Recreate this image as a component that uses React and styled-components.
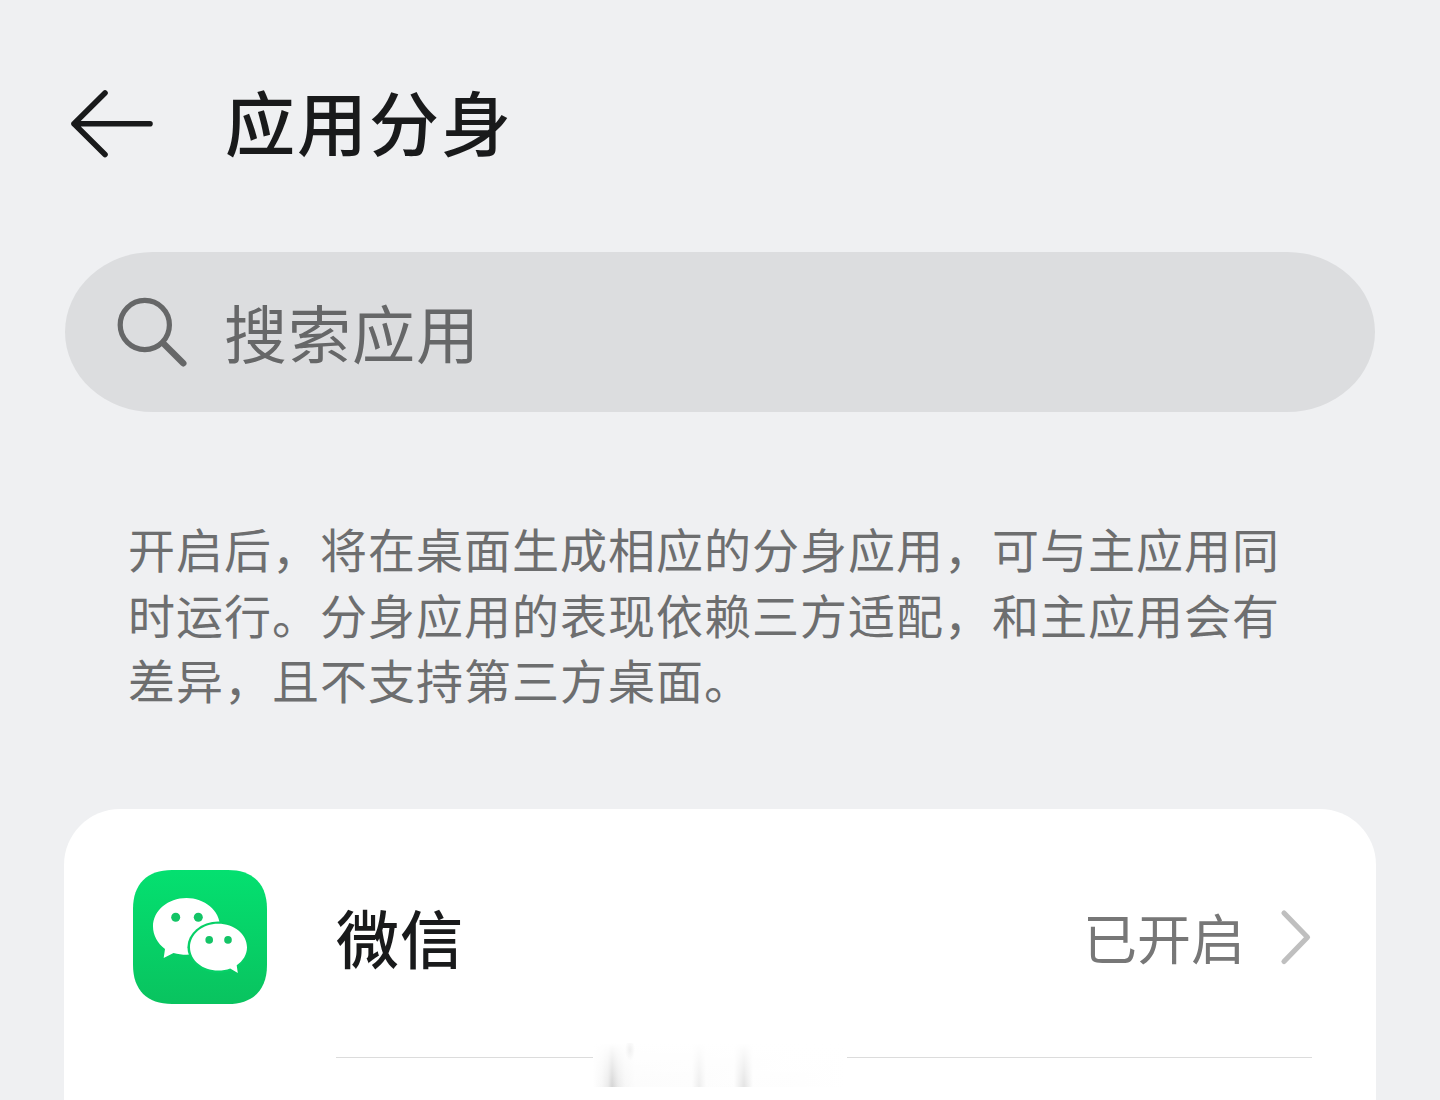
import React from 'react';
import styled, { createGlobalStyle } from 'styled-components';

const apps = [{ id: 'wechat', name: '微信', status: '已开启' }];

const WeChatLogo = () => (
  <svg width='136' height='136' viewBox='0 0 136 136'>
    <defs>
      <linearGradient id='wechatGreen' x1='0' y1='0' x2='0' y2='1'>
        <stop offset='0' stopColor='#04e070' />
        <stop offset='1' stopColor='#09c35f' />
      </linearGradient>
    </defs>
    <path
      d='M1 40C1 15 15 1 40 1H96C121 1 135 15 135 40V96C135 121 121 135 96 135H40C15 135 1 121 1 96Z'
      fill='url(#wechatGreen)'
    />
    <path
      d='M54.500 29C36 29 21 41.500 21 57.500C21 66.500 25.700 74.500 33 80L31.700 89L41.500 84C46 85.400 50 85.700 54.500 85.700C72.500 85.700 88 73 88 57.500C88 41.500 72.500 29 54.500 29Z'
      fill='#fff'
    />
    <ellipse cx='86.200' cy='78.300' rx='30.800' ry='25.700' fill='#07d067' />
    <path
      d='M86.200 54.800C70.600 54.800 58 65.100 58 78.300C58 91.500 70.600 101.600 86.200 101.600C90.500 101.600 94.500 100.800 98.200 99.400L105.800 104L104.700 96.300C111 92 115 85.700 115 78.300C115 65.100 102.100 54.800 86.200 54.800Z'
      fill='#fff'
    />
    <g fill='#13c466'>
      <circle cx='43.700' cy='48.300' r='4.500' />
      <circle cx='66.300' cy='48.300' r='4.500' />
      <circle cx='77.200' cy='70.900' r='3.800' />
      <circle cx='96' cy='70.900' r='3.800' />
    </g>
  </svg>
);

const BackIcon = () => (
  <svg width='88' height='76' viewBox='0 0 88 76' fill='none'>
    <path
      d='M38 8L7 38.700L38 69.500M7 38.700H83'
      stroke='#191a1b'
      strokeWidth='5.600'
      strokeLinecap='round'
      strokeLinejoin='round'
    />
  </svg>
);

const SearchIcon = () => (
  <svg width='72' height='72' viewBox='0 0 72 72' fill='none'>
    <g stroke='#666768' strokeLinecap='round'>
      <circle cx='28.800' cy='29' r='24.600' strokeWidth='5.200' />
      <path d='M47 47L67.300 67.300' strokeWidth='6.400' />
    </g>
  </svg>
);

const ChevronIcon = () => (
  <svg width='32' height='58' viewBox='0 0 32 58' fill='none'>
    <path
      d='M4 5L27.500 29.300L4 53.500'
      stroke='#bfbfbf'
      strokeWidth='5.200'
      strokeLinecap='round'
      strokeLinejoin='round'
    />
  </svg>
);

const App = () => {
  return (
    <Page>
      <GlobalStyle />
      <Header>
        <BackButton aria-label='返回'>
          <BackIcon />
        </BackButton>
        <Title>应用分身</Title>
      </Header>
      <SearchBar>
        <SearchIcon />
        <Placeholder>搜索应用</Placeholder>
      </SearchBar>
      <Description>
        开启后，将在桌面生成相应的分身应用，可与主应用同时运行。分身应用的表现依赖三方适配，和主应用会有差异，且不支持第三方桌面。
      </Description>
      <Card>
        {apps.map((app) => (
          <AppRow key={app.id}>
            <WeChatLogo />
            <RowBody>
              <AppName>{app.name}</AppName>
              <Status>{app.status}</Status>
              <ChevronIcon />
              <Smudge />
            </RowBody>
          </AppRow>
        ))}
      </Card>
    </Page>
  );
};

export default App;

const GlobalStyle = createGlobalStyle`
  * {
    box-sizing: border-box;
  }
  body {
    margin: 0;
    background: #eff0f2;
  }
  svg {
    display: block;
    flex-shrink: 0;
  }
`;

const Page = styled.div`
  width: 1440px;
  height: 1100px;
  overflow: hidden;
  display: flex;
  flex-direction: column;
  padding: 73px 64px 0;
  background: #eff0f2;
  font-family: 'Noto Sans CJK SC', sans-serif;
`;

const Header = styled.header`
  display: flex;
  align-items: center;
  height: 100px;
  padding-left: 3px;
`;

const BackButton = styled.button`
  padding: 0;
  border: 0;
  background: none;
`;

const Title = styled.h1`
  margin: 0 0 4px 70px;
  font-size: 70px;
  line-height: 100px;
  font-weight: 500;
  letter-spacing: 2px;
  color: #191a1b;
`;

const SearchBar = styled.div`
  display: flex;
  align-items: center;
  gap: 36px;
  height: 160px;
  margin: 79px 1px 0;
  padding-left: 51px;
  border-radius: 88px / 80px;
  background: #dcdddf;
`;

const Placeholder = styled.span`
  padding-bottom: 3px;
  font-size: 63px;
  line-height: 96px;
  font-weight: 400;
  letter-spacing: 1px;
  color: #666768;
`;

const Description = styled.p`
  width: 1154px;
  margin: 103px 0 0 64px;
  font-size: 47px;
  line-height: 65.6px;
  font-weight: 400;
  letter-spacing: 1px;
  color: #6d6e6f;
`;

const Card = styled.section`
  flex: 1;
  margin-top: 97px;
  border-radius: 56px 56px 0 0;
  background: #fff;
`;

const AppRow = styled.div`
  display: flex;
  align-items: center;
  height: 249px;
  padding: 0 64px 0 68px;

  > svg {
    margin-top: 7px;
  }
`;

const RowBody = styled.div`
  position: relative;
  display: flex;
  align-items: center;
  flex: 1;
  height: 100%;
  margin-left: 68px;
  padding-top: 8px;
  border-bottom: 1px solid #dcdcdc;
`;

const AppName = styled.span`
  flex: 1;
  padding-bottom: 2px;
  font-size: 63px;
  line-height: 96px;
  font-weight: 500;
  letter-spacing: 1px;
  color: #191a1b;
`;

const Status = styled.span`
  margin-right: 35px;
  font-size: 54px;
  line-height: 80px;
  font-weight: 400;
  color: #777;
`;

// faint washed-out mark that hangs over the divider
const Smudge = styled.span`
  position: absolute;
  left: 257px;
  bottom: -30px;
  width: 254px;
  height: 44px;
  background: radial-gradient(
      ellipse 5px 11px at 37px 7px,
      #f0f0f0,
      transparent
    ),
    linear-gradient(#fff, rgba(255, 255, 255, 0.25) 100%),
    linear-gradient(
      90deg,
      #fff 0,
      #f4f4f4 9px,
      #e4e4e4 15px,
      #c6c6c6 19px,
      #e4e4e4 25px,
      #f4f4f4 32px,
      #fbfbfb 42px,
      #fcfcfc 99px,
      #e8e8e8 106px,
      #fcfcfc 113px,
      #fdfdfd 141px,
      #dadada 151px,
      #fdfdfd 160px,
      #fff 100%
    );
`;
